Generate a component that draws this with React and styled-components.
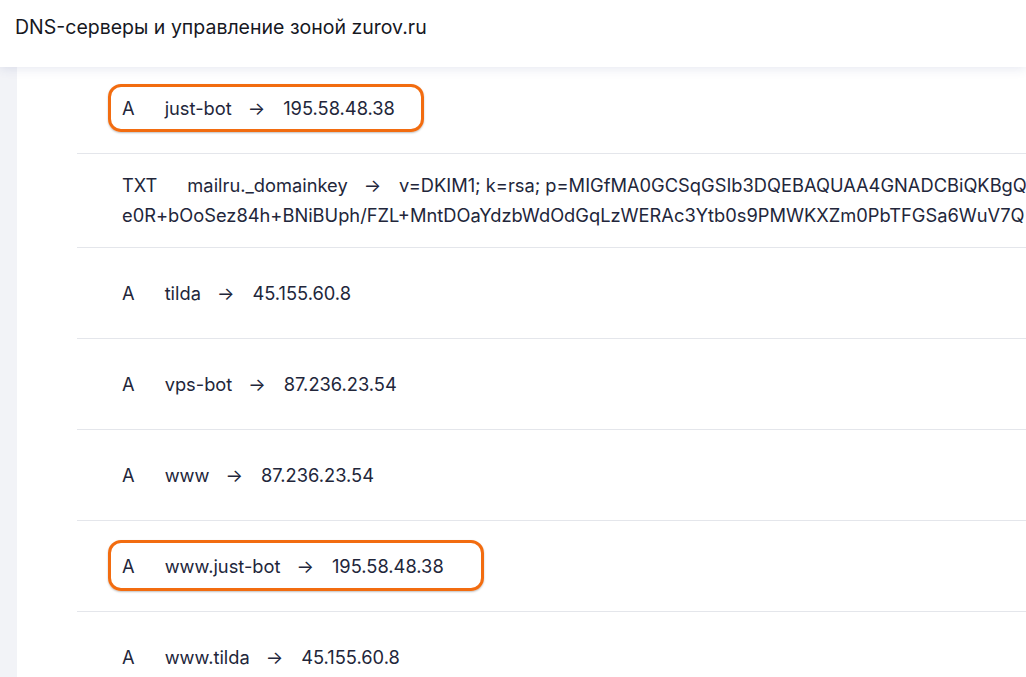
import React from "react";
import styled, { createGlobalStyle } from "styled-components";

const records = [
  { type: "A", name: "just-bot", value: "195.58.48.38", mark: { padY: 6, padRight: 26 } },
  {
    type: "TXT",
    name: "mailru._domainkey",
    value: "v=DKIM1; k=rsa; p=MIGfMA0GCSqGSIb3DQEBAQUAA4GNADCBiQKBgQ",
    more: "e0R+bOoSez84h+BNiBUph/FZL+MntDOaYdzbWdOdGqLzWERAc3Ytb0s9PMWKXZm0PbTFGSa6WuV7Q",
  },
  { type: "A", name: "tilda", value: "45.155.60.8" },
  { type: "A", name: "vps-bot", value: "87.236.23.54" },
  { type: "A", name: "www", value: "87.236.23.54" },
  { type: "A", name: "www.just-bot", value: "195.58.48.38", mark: { padY: 7.5, padRight: 37 } },
  { type: "A", name: "www.tilda", value: "45.155.60.8" },
];

const App = () => {
  return (
    <Page>
      <GlobalStyle />
      <Header>DNS-серверы и управление зоной zurov.ru</Header>
      <Body>
        <Side />
        <Content>
          <List>
            {records.map((r, i) => (
              <Row key={i}>
                {r.mark ? (
                  <Marked padY={r.mark.padY} padRight={r.mark.padRight}>
                    <Record r={r} />
                  </Marked>
                ) : (
                  <Line>
                    <Record r={r} />
                  </Line>
                )}
              </Row>
            ))}
          </List>
        </Content>
      </Body>
    </Page>
  );
};

const Record = ({ r }) => (
  <>
    <Type>{r.type}</Type>
    <Name>{r.name}</Name>
    <Arrow>→</Arrow>
    <span>{r.value}</span>
    {r.more && (
      <>
        <br />
        <span>{r.more}</span>
      </>
    )}
  </>
);

export default App;

const GlobalStyle = createGlobalStyle`
  html, body {
    margin: 0;
    padding: 0;
    background: #ffffff;
    overflow: hidden;
  }
  body {
    font-family: Inter, "Noto Sans", sans-serif;
    color: #22263a;
  }
`;

const Page = styled.div`
  width: 1026px;
  height: 677px;
  overflow: hidden;
  display: flex;
  flex-direction: column;
`;

const Header = styled.div`
  position: relative;
  z-index: 2;
  height: 67px;
  box-sizing: border-box;
  padding: 15px 15px 0;
  font-size: 19.5px;
  line-height: 24px;
  color: #16181f;
  background: #ffffff;
  box-shadow: 0 2px 10px rgba(60, 70, 140, 0.12);
`;

const Body = styled.div`
  flex: 1;
  display: flex;
  margin-top: -4px;
  min-height: 0;
`;

const Side = styled.div`
  width: 17px;
  flex-shrink: 0;
  background: #f2f3f7;
`;

const Content = styled.div`
  flex: 1;
  padding-left: 60px;
  background: #ffffff;
  min-width: 0;
`;

const List = styled.div`
  display: flex;
  flex-direction: column;
`;

const Row = styled.div`
  min-height: 91px;
  box-sizing: border-box;
  padding: 16px 0 17px 45px;
  display: flex;
  align-items: center;
  border-bottom: 1px solid #e4e6eb;
  font-size: 18.3px;
  line-height: 30px;
  white-space: nowrap;
  overflow: hidden;
`;

const Line = styled.div`
  white-space: nowrap;
`;

const Marked = styled.div`
  margin-left: -14px;
  padding: ${p => p.padY}px ${p => p.padRight}px ${p => p.padY}px 11px;
  border: 3px solid #f26c10;
  border-radius: 13px;
  box-shadow: 0 1px 2px rgba(0, 0, 0, 0.25);
`;

const Type = styled.span`
  margin-right: 30px;
`;

const Name = styled.span`
  margin-right: 16px;
`;

const Arrow = styled.span`
  margin-right: 18px;
`;
